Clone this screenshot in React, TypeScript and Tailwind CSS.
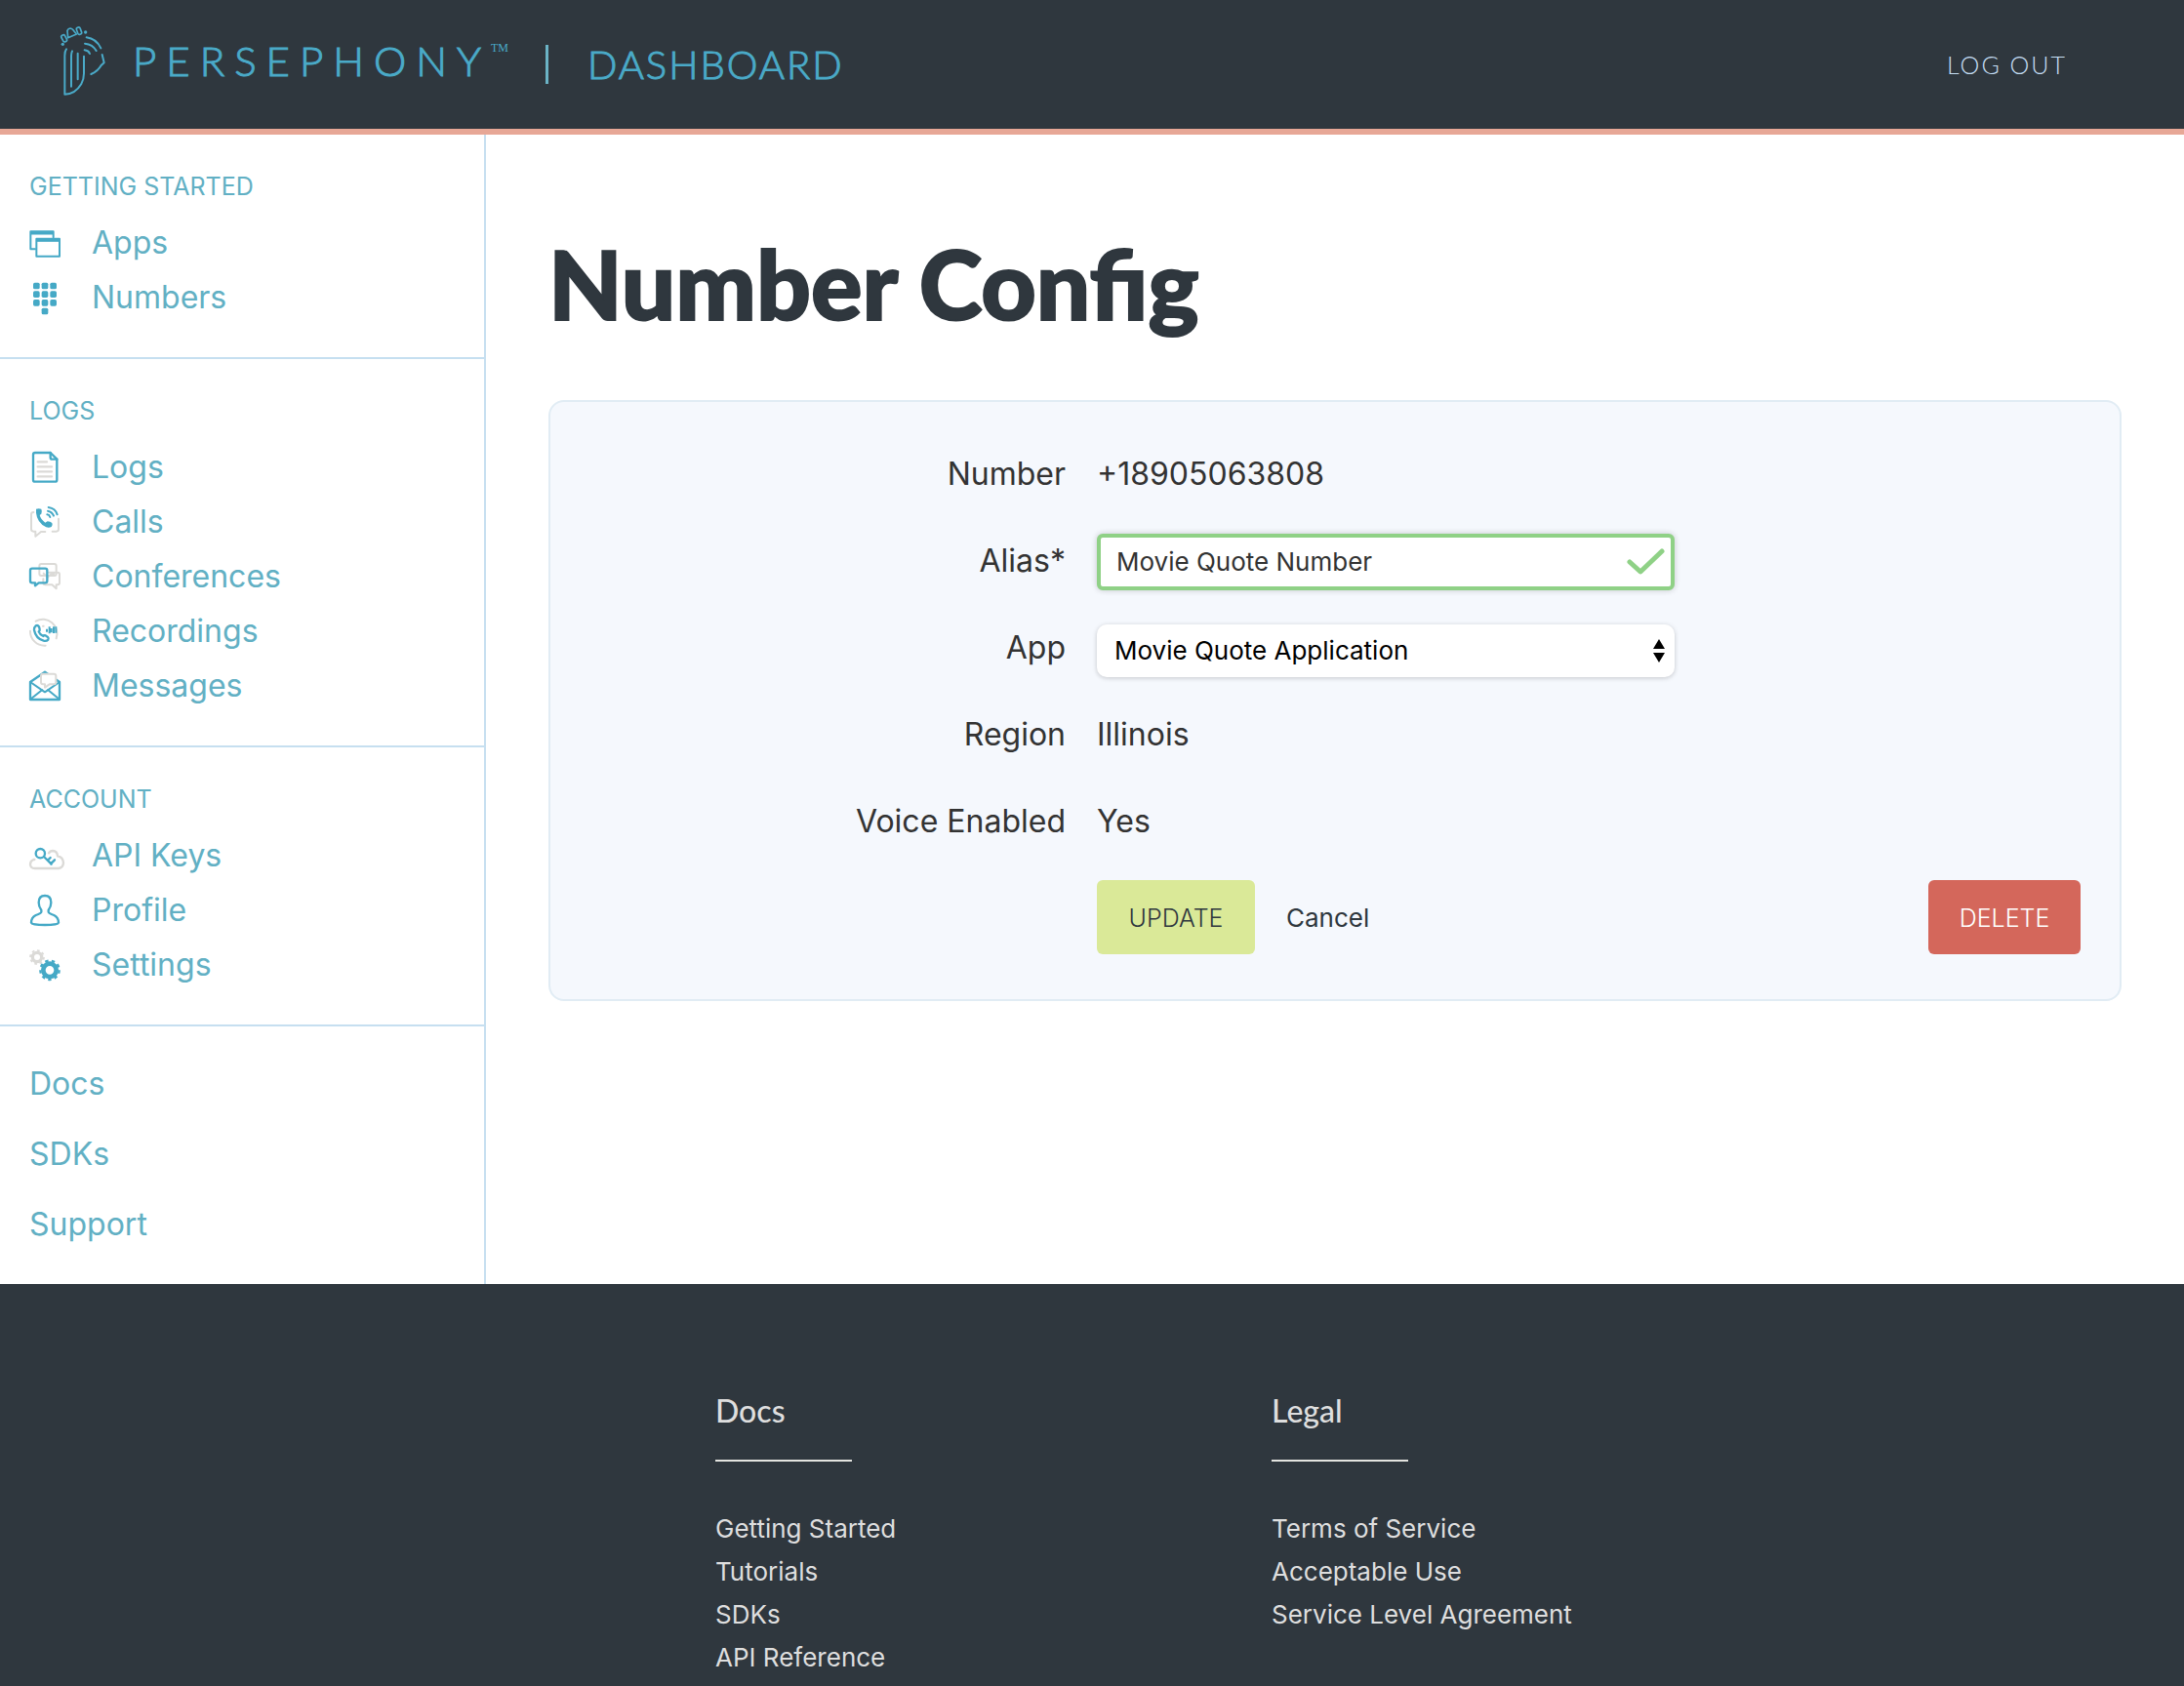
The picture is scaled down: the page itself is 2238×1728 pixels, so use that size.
import type { ReactNode } from "react";

const BLUE = "#45a9c6";
const GREY = "#dbdad7";

function Icon({ children }: { children: ReactNode }) {
  return (
    <svg
      viewBox="0 0 96 96"
      className="size-8 shrink-0 overflow-visible"
      fill="none"
      stroke={BLUE}
      strokeWidth={6}
      strokeLinecap="round"
      strokeLinejoin="round"
      aria-hidden="true"
    >
      {children}
    </svg>
  );
}

const AppsIcon = () => (
  <Icon>
    <path d="M18 67H4V13h70v18" />
    <path d="M4 17h70" strokeWidth={11} strokeLinecap="butt" />
    <rect x="22" y="35" width="71" height="54" />
    <path d="M22 39h71" strokeWidth={11} strokeLinecap="butt" />
  </Icon>
);

const NumbersIcon = () => (
  <Icon>
    <g fill={BLUE} stroke="none">
      {[12, 38, 64].map((x) =>
        [2, 28, 54].map((y) => <rect key={`${x}-${y}`} x={x} y={y} width="20" height="20" rx="5" />)
      )}
      <rect x="38" y="80" width="20" height="20" rx="5" />
    </g>
  </Icon>
);

const LogsIcon = () => (
  <Icon>
    <path d="M65 3H18q-6 0-6 6v77q0 6 6 6h61q6 0 6-6V23z" strokeWidth={7} />
    <path d="M65 3v14q0 6 6 6h14" strokeWidth={7} />
    <g stroke={GREY} strokeWidth={7}>
      <path d="M26 31h28M26 46h43M26 61h43M26 76h43" />
    </g>
  </Icon>
);

const CallsIcon = () => (
  <Icon>
    <g stroke={GREY}>
      <path d="M13 18q-7 0-7 7v45q0 7 7 7h6v15l17-14h13" />
      <path d="M90 38v32q0 7-7 7H71" />
    </g>
    <path
      d="M21 8q8-3 16 0q3 6 0 15l-5 4q3 12 17 23l7-4q9 0 14 5q3 7-2 12q-7 4-16 1Q24 50 21 20z"
      fill={BLUE}
      stroke="none"
    />
    <path d="M59 3q21 3 27 22M57 14q13 2 18 15M55 25q7 1 9 8" />
  </Icon>
);

const ConferencesIcon = () => (
  <Icon>
    <g stroke={GREY}>
      <path d="M31 22v-7q0-6 6-6h40q6 0 6 6v24q0 6-6 6H37q-6 0-6-6z" />
      <path d="M60 35h27q6 0 6 6v26q0 6-6 6h-4v12L70 73H49q-6 0-6-6V55" />
      <path d="M44 38l12 12 12-11 8 0" />
    </g>
    <path
      d="M9 23h40q6 0 6 6v32q0 6-6 6H29L18 76V67H9q-6 0-6-6V29q0-6 6-6z"
      strokeWidth={7}
    />
  </Icon>
);

const RecordingsIcon = () => (
  <Icon>
    <g stroke={GREY}>
      <path d="M20 17A44 44 0 0 1 83 70" />
      <path d="M3 47A44 44 0 0 0 50 92" />
      <path d="M42 32h2" />
    </g>
    <path
      d="M20 31q-6 5-5 13q5 26 29 33q9 2 14-3q3-4-1-8l-7-5q-4-2-7 2q-10-4-14-14q4-3 3-7l-2-8q-4-6-10-3z"
      strokeWidth={7}
    />
    <path d="M54 41v9M62 34v21M68 39v13M75 34v20M82 34v19" strokeLinecap="butt" />
  </Icon>
);

const MessagesIcon = () => (
  <Icon>
    <path d="M3 36L48 5l45 31v54H3z" strokeWidth={7} />
    <path d="M3 36l45 31 45-31M5 88l35-28M91 88L57 60" />
    <path d="M42 11h34q6 0 6 6v20q0 6-6 6H62L48 53V43h-6q-6 0-6-6V17q0-6 6-6z" fill="#fff" stroke={GREY} />
  </Icon>
);

const KeysIcon = () => (
  <Icon>
    <path
      d="M16 60H13Q3 64 3 75q1 12 14 12h73q14-2 15-17q-1-18-18-21q-1-15-15-16q-8 0-12 7"
      stroke={GREY}
      strokeWidth={7}
    />
    <circle cx="34" cy="41" r="14" strokeWidth={7} />
    <path d="M45 51l23 23M57 62l8-8M66 73l12-12" strokeWidth={7} />
  </Icon>
);

const ProfileIcon = () => (
  <Icon>
    <path
      d="M37 53V47Q29 37 29 24Q29 3 48 3T67 24Q67 37 59 47v6Q60 57 76 63Q90 70 90 86Q88 93 48 93T6 86Q6 70 20 63Q36 57 37 53z"
      strokeWidth={7}
    />
  </Icon>
);

const SettingsIcon = () => (
  <Icon>
    <g stroke={GREY} strokeLinecap="butt">
      <circle cx="24" cy="24" r="14" strokeWidth={10} />
      <circle cx="24" cy="24" r="21" strokeWidth={5} pathLength={80} strokeDasharray="5 5" />
    </g>
    <g strokeLinecap="butt">
      <circle cx="63" cy="64" r="20" strokeWidth={14} />
      <circle cx="63" cy="64" r="29" strokeWidth={7} pathLength={90} strokeDasharray="5 5" />
    </g>
  </Icon>
);

function LogoMark() {
  return (
    <svg
      viewBox="60 45 144 222"
      className="h-[74px] w-12 shrink-0"
      fill="none"
      stroke="#4aaac8"
      strokeWidth={6}
      strokeLinecap="round"
      strokeLinejoin="round"
      aria-hidden="true"
    >
      <path d="M84 121q-5 6-5 20v119q32 0 51-32q8-14 8-32v-53" />
      <path d="M102 127q-3 6-3 14v95M119 134v80" />
      <path d="M146 85q30 4 44 33M141 104q24 2 35 22M140 124q12 1 16 11" />
      <path d="M194 138l6 25q-7 6-9 8q-10 18-31 27" />
      <g strokeWidth={5}>
        <path d="M89 86l-2-22q3-7 9-7q6 1 9 5l10 13z" />
        <rect x="117" y="54" width="12" height="22" rx="5" transform="rotate(-20 123 65)" />
        <rect x="71" y="77" width="12" height="22" rx="5" transform="rotate(-28 77 88)" />
      </g>
      <g fill="#4aaac8" stroke="none">
        <circle cx="143" cy="69" r="5" />
        <circle cx="73" cy="106" r="5" />
      </g>
    </svg>
  );
}

const sections = [
  {
    title: "GETTING STARTED",
    items: [
      { label: "Apps", icon: <AppsIcon /> },
      { label: "Numbers", icon: <NumbersIcon /> },
    ],
  },
  {
    title: "LOGS",
    items: [
      { label: "Logs", icon: <LogsIcon /> },
      { label: "Calls", icon: <CallsIcon /> },
      { label: "Conferences", icon: <ConferencesIcon /> },
      { label: "Recordings", icon: <RecordingsIcon /> },
      { label: "Messages", icon: <MessagesIcon /> },
    ],
  },
  {
    title: "ACCOUNT",
    items: [
      { label: "API Keys", icon: <KeysIcon /> },
      { label: "Profile", icon: <ProfileIcon /> },
      { label: "Settings", icon: <SettingsIcon /> },
    ],
  },
];

const footerColumns = [
  { title: "Docs", links: ["Getting Started", "Tutorials", "SDKs", "API Reference"] },
  { title: "Legal", links: ["Terms of Service", "Acceptable Use", "Service Level Agreement"] },
];

function Row({ label, htmlFor, children }: { label: string; htmlFor?: string; children: ReactNode }) {
  return (
    <div className="grid min-h-[89px] grid-cols-[1fr_2fr] items-center gap-8">
      {htmlFor ? (
        <label htmlFor={htmlFor} className="text-right">
          {label}
        </label>
      ) : (
        <span className="text-right">{label}</span>
      )}
      <div>{children}</div>
    </div>
  );
}

export default function App() {
  return (
    <div className="flex h-screen flex-col overflow-hidden bg-white font-['Inter',sans-serif] text-[#333]">
      <header className="flex h-[138px] shrink-0 items-center border-b-[6px] border-[#e7a796] bg-[#2f373e] pr-[120px] pl-[60px]">
        <a href="#" className="flex items-center gap-7 pb-2 text-[#4aaac8]">
          <LogoMark />
          <span className="flex items-start font-['Lato',sans-serif] text-[42px] leading-[50px] font-light">
            <span className="tracking-[10px] [-webkit-text-stroke:1px_#4aaac8]">PERSEPHONY</span>
            <span className="pt-1 font-['Liberation_Serif',serif] text-[12px] leading-4">TM</span>
          </span>
        </a>
        <span className="ml-[38px] h-10 w-[3px] bg-[#6bb3c6]" />
        <span className="ml-10 font-['Lato',sans-serif] text-[40px] leading-[48px] font-light tracking-[2px] text-[#4aaac8] [-webkit-text-stroke:1px_#4aaac8]">
          DASHBOARD
        </span>
        <a
          href="#"
          className="ml-auto font-['Lato',sans-serif] text-[25px] leading-8 font-light tracking-[2px] text-[#c6dff5]"
        >
          LOG OUT
        </a>
      </header>

      <div className="flex shrink-0">
        <nav className="w-[498px] shrink-0 border-r-2 border-[#c6dff0] text-[32px] text-[#62b0c4]">
          {sections.map((section) => (
            <section key={section.title} className="border-b-2 border-[#c6dff0] px-[30px] pt-[35px] pb-[33px]">
              <h2 className="mb-3 text-[25px] leading-9">{section.title}</h2>
              <ul>
                {section.items.map((item) => (
                  <li key={item.label}>
                    <a href="#" className="flex h-14 items-center gap-8">
                      {item.icon}
                      {item.label}
                    </a>
                  </li>
                ))}
              </ul>
            </section>
          ))}
          <ul className="px-[30px] pt-[23px] pb-[25px]">
            {["Docs", "SDKs", "Support"].map((label) => (
              <li key={label}>
                <a href="#" className="flex h-[72px] items-center">
                  {label}
                </a>
              </li>
            ))}
          </ul>
        </nav>

        <main className="flex-1 pt-[92px] pr-16 pl-16">
          <h1 className="font-['Lato',sans-serif] text-[98px] leading-[120px] font-black text-[#2f373e] [-webkit-text-stroke:2px_#2f373e]">
            Number Config
          </h1>

          <form className="mt-[60px] rounded-2xl border-2 border-[#e1ecf4] bg-[#f5f8fd] pt-[29px] pr-10 pb-[46px] pl-6 text-[32px]">
            <Row label="Number">+18905063808</Row>
            <Row label="Alias*" htmlFor="alias">
              <div className="relative mt-0.5 w-[592px]">
                <input
                  id="alias"
                  defaultValue="Movie Quote Number"
                  className="block h-[58px] w-full rounded-md border-4 border-[#8fd186] bg-white pr-14 pl-4 text-[26px] shadow-[0_0_6px_rgba(0,0,0,0.2)] outline-none"
                />
                <svg
                  viewBox="0 0 40 28"
                  className="pointer-events-none absolute top-[15px] right-[10px] h-7 w-10"
                  fill="none"
                  stroke="#8fd186"
                  strokeWidth={5}
                  strokeLinecap="round"
                  strokeLinejoin="round"
                  aria-hidden="true"
                >
                  <path d="M4 14l11 10L37 3" />
                </svg>
              </div>
            </Row>
            <Row label="App" htmlFor="app">
              <div className="relative mt-1.5 w-[592px]">
                <select
                  id="app"
                  className="block h-[54px] w-full appearance-none rounded-[10px] bg-white px-[18px] text-[26px] text-black shadow-[0_1px_5px_rgba(0,0,0,0.2)]"
                >
                  <option>Movie Quote Application</option>
                </select>
                <svg
                  viewBox="0 0 12 24"
                  className="pointer-events-none absolute top-[15px] right-[10px] h-6 w-3"
                  fill="#000"
                  aria-hidden="true"
                >
                  <path d="M6 0l6 10H0zM6 24l6-10H0z" />
                </svg>
              </div>
            </Row>
            <Row label="Region">Illinois</Row>
            <Row label="Voice Enabled">Yes</Row>
            <div className="mt-4 grid grid-cols-[1fr_2fr] gap-8">
              <div className="col-start-2 flex items-center text-[26px]">
                <button
                  type="submit"
                  className="h-[76px] w-[162px] rounded-md bg-[#dae998] pt-1 text-[25px] font-light text-[#2f373e]"
                >
                  UPDATE
                </button>
                <button type="button" className="ml-8 text-[#2f373e]">
                  Cancel
                </button>
                <button
                  type="button"
                  className="ml-auto h-[76px] w-[156px] rounded-md bg-[#d4675b] pt-1 text-[25px] font-light text-white"
                >
                  DELETE
                </button>
              </div>
            </div>
          </form>
        </main>
      </div>

      <footer className="grid flex-1 grid-cols-[733fr_570fr_935fr] bg-[#2f373e] pt-[110px] text-[#dedede]">
        {footerColumns.map((column, index) => (
          <section key={column.title} className={index === 0 ? "col-start-2" : ""}>
            <h3 className="font-['Lato',sans-serif] text-[32px] leading-10 font-medium">{column.title}</h3>
            <div className="mt-[30px] mb-[47px] h-0.5 w-[140px] bg-[#e4e4e0]" />
            <ul className="text-[26px] leading-[44px]">
              {column.links.map((link) => (
                <li key={link}>
                  <a href="#">{link}</a>
                </li>
              ))}
            </ul>
          </section>
        ))}
      </footer>
    </div>
  );
}
